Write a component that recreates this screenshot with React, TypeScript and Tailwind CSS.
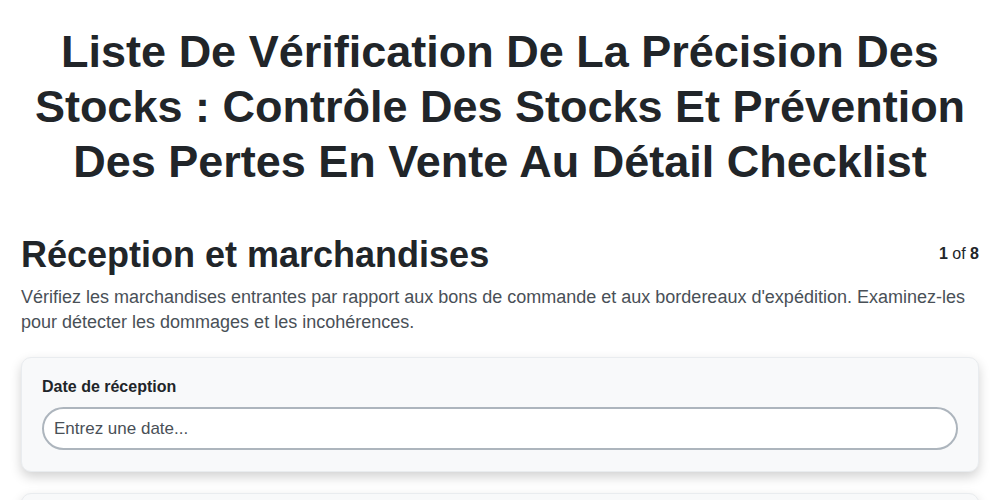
import React from "react";

export default function App() {
  return (
    <div className="min-h-screen bg-white text-[#212529]" style={{ fontFamily: '"Liberation Sans", Arial, sans-serif' }}>
      <div className="px-[21px] pt-[24px]">
        <h1 className="text-center font-bold text-[45px] leading-[55px] px-[10px]">
          Liste De Vérification De La Précision Des Stocks : Contrôle Des Stocks Et Prévention Des Pertes En Vente Au Détail Checklist
        </h1>
        <div className="mt-[44px] flex items-start justify-between">
          <h2 className="font-bold text-[36px] leading-[44px]">Réception et marchandises</h2>
          <div className="text-[16px] leading-[24px] mt-[9px]">
            <span className="font-bold">1</span> of <span className="font-bold">8</span>
          </div>
        </div>
        <p className="mt-[8px] text-[18px] leading-[25px] text-[#495057]">
          Vérifiez les marchandises entrantes par rapport aux bons de commande et aux bordereaux d'expédition. Examinez-les pour détecter les dommages et les incohérences.
        </p>
        <div className="mt-[22px] flex flex-col gap-[21px]">
          <div className="rounded-[10px] border border-[#e9ecef] bg-[#f8f9fa] px-[20px] pt-[17px] pb-[21px] shadow-[0_5px_12px_rgba(0,0,0,0.18)]">
            <label className="block text-[16px] leading-[24px] font-bold text-[#212529] mb-[8px]">Date de réception</label>
            <input
              type="text"
              placeholder="Entrez une date..."
              className="block w-full h-[43px] rounded-full border-2 border-[#adb5bd] bg-white px-[10px] text-[17px] text-[#212529] placeholder:text-[#495057] outline-none"
            />
          </div>
          <div className="rounded-[10px] border border-[#e9ecef] bg-[#f8f9fa] px-[20px] pt-[17px] pb-[21px] shadow-[0_5px_12px_rgba(0,0,0,0.18)]">
            <label className="block text-[16px] leading-[24px] font-bold text-[#212529] mb-[8px]">Numéro du bon de commande</label>
            <input
              type="text"
              placeholder="Entrez un numéro..."
              className="block w-full h-[43px] rounded-full border-2 border-[#adb5bd] bg-white px-[10px] text-[17px] text-[#212529] placeholder:text-[#495057] outline-none"
            />
          </div>
        </div>
      </div>
    </div>
  );
}
